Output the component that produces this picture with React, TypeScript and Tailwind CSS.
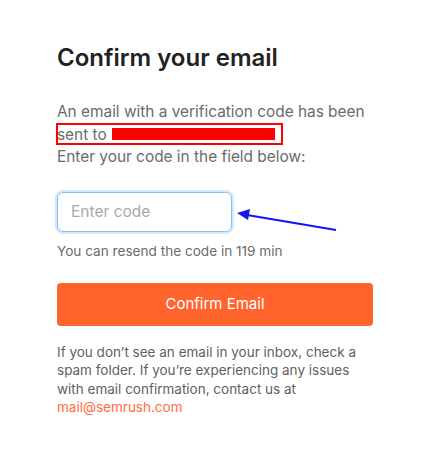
import React, { useState } from 'react';

const ConfirmEmail: React.FC = () => {
  const [code, setCode] = useState('');

  return (
    <div className="relative w-[441px] h-[460px] bg-white px-[57px] pt-[44px] font-['Inter',sans-serif]">
      <h1 className="text-[24px] leading-[28px] font-semibold text-[#222]">Confirm your email</h1>

      <div className="relative mt-[29px] text-[15.4px] leading-[22.5px] text-[#6b6b6b]">
        <div>An email with a verification code has been</div>
        <div>sent to</div>
        <div>Enter your code in the field below:</div>
        {/* redacted address */}
        <div className="absolute left-[-1px] top-[22px] w-[227px] h-[22px] border-2 border-[#ff0000] p-[1px] pl-[54px]">
          <div className="mt-[2px] h-[12px] w-[163px] bg-[#ff0000]" />
        </div>
      </div>

      <div className="mt-[23px] w-[175px]">
        <input
          type="text"
          placeholder="Enter code"
          value={code}
          onChange={(e) => setCode(e.target.value)}
          className="block w-full h-[40px] px-[13px] rounded-[6px] border border-[#86c0ef] ring-2 ring-[#d3e8fb] text-[15.5px] text-[#333] placeholder-[#a9a9a9] outline-none"
        />
      </div>

      <p className="mt-[10px] text-[13.6px] leading-[18px] text-[#6b6b6b]">You can resend the code in 119 min</p>

      <button
        type="button"
        className="mt-[23px] w-[316px] h-[43px] rounded-[4px] bg-[#ff642d] text-white text-[15px]"
      >
        Confirm Email
      </button>

      <p className="mt-[17px] w-[305px] text-[13.5px] leading-[18.5px] text-[#5f5f5f]">
        If you don’t see an email in your inbox, check a spam folder. If you’re experiencing any issues with email
        confirmation, contact us at <br />
        <a href="#" className="text-[#ff6e40]">mail@semrush.com</a>
      </p>

      {/* annotation arrow */}
      <svg className="absolute left-0 top-0 pointer-events-none" width="441" height="460">
        <line x1="336" y1="230" x2="247" y2="215" stroke="#1414f0" strokeWidth="2" />
        <polygon points="237,213 250,209 248,220" fill="#1414f0" />
      </svg>
    </div>
  );
};

export default function App() {
  return <ConfirmEmail />;
}
